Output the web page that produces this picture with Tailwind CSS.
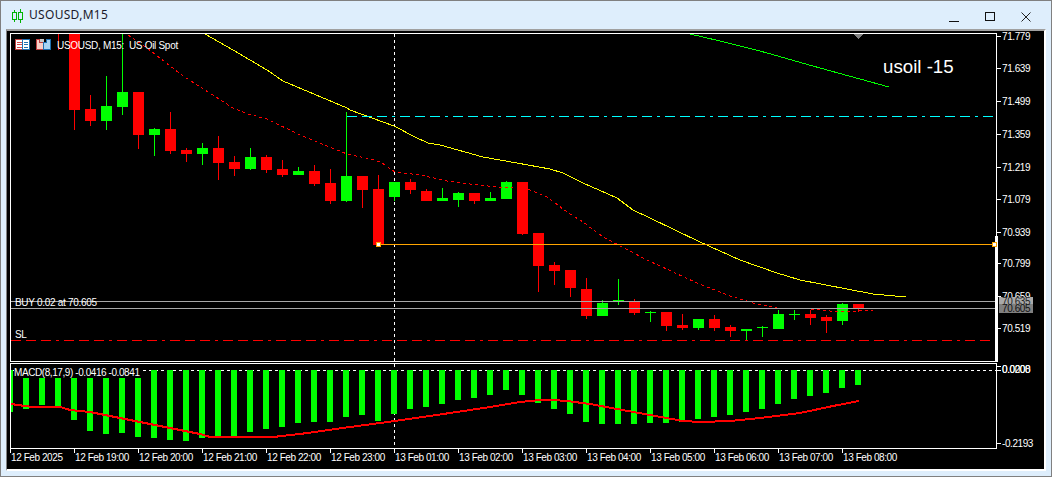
<!DOCTYPE html>
<html>
<head>
<meta charset="utf-8">
<script src="https://cdn.jsdelivr.net/npm/@tailwindcss/browser@4"></script>
</head>
<body class="m-0 overflow-hidden">
<div class="w-[1052px] h-[477px] flex flex-col bg-[#deeefc] border border-[#808080] font-['Liberation_Sans',sans-serif]">
  <header class="h-[28px] flex items-center shrink-0">
    <svg class="ml-[11px] mt-[1px]" width="12" height="14" viewBox="0 0 12 14" fill="none" stroke="#00b400" stroke-width="1" shape-rendering="crispEdges">
      <path d="M2.5 1V13M8.5 0V14"/>
      <rect x="0.5" y="3.5" width="4" height="7" fill="#deeefc"/>
      <rect x="6.5" y="3.5" width="4" height="7" fill="#deeefc"/>
    </svg>
    <span class="ml-[5px] text-[12px] tracking-[0.3px] text-[#1a1a2a] font-['Noto_Sans',sans-serif]">USOUSD,M15</span>
    <div class="ml-auto mr-[7px] flex h-full">
      <div class="w-9 flex items-center justify-center">
        <svg class="mt-[3px]" width="10" height="10" viewBox="0 0 10 10" fill="none" stroke="#111" shape-rendering="crispEdges"><path d="M0 9.5H10"/></svg>
      </div>
      <div class="w-9 flex items-center justify-center">
        <svg class="mt-[3px]" width="10" height="10" viewBox="0 0 10 10" fill="none" stroke="#111" shape-rendering="crispEdges"><rect x="0.5" y="0.5" width="9" height="8"/></svg>
      </div>
      <div class="w-9 flex items-center justify-center">
        <svg class="mt-[3px]" width="10" height="10" viewBox="0 0 10 10" fill="none" stroke="#222"><path d="M0.5 0.5L9.5 9.5M9.5 0.5L0.5 9.5"/></svg>
      </div>
    </div>
  </header>
  <main class="ml-[5px] mr-[5px] border-t-2 border-t-[#a0a0a0] border-l border-l-[#808080] border-r-2 border-r-white border-b-2 border-b-white bg-black">
    <svg class="block text-[10px] tracking-[-0.42px]" width="1036" height="438" viewBox="7 31 1036 438" fill="none">
      <g shape-rendering="crispEdges">
        <!-- crosshair and zero line lie under the series -->
        <path stroke="#ffffff" stroke-dasharray="3 3" d="M394.5 34V448M11 370.5H996"/>
        <!-- candles -->
        <path stroke="#ff0000" d="M58.5 34V50M74.5 34V130M90.5 95V126M138.5 92V149M170.5 112V154M186.5 148V162M218.5 136V180M234.5 156V176M266.5 155V173M282.5 160V177M314.5 165V186M330.5 169V204M362.5 176V208M378.5 175V245M410.5 179V194M426.5 189V201M474.5 193V204M522.5 182V235M538.5 233V292M554.5 262V285M570.5 270V297M586.5 278V319M634.5 299V315M666.5 312V331M682.5 314V330M714.5 315V331M730.5 325V337M810.5 310V325M826.5 315V333M858.5 304V312"/>
        <path fill="#ff0000" d="M69 34h11v76h-11zM85 109h11v12h-11zM133 92h11v43h-11zM165 129h11v22h-11zM181 150h11v4h-11zM213 148h11v15h-11zM229 162h11v7h-11zM261 157h11v13h-11zM277 169h11v6h-11zM309 171h11v13h-11zM325 183h11v18h-11zM357 176h11v14h-11zM373 189h11v56h-11zM405 182h11v8h-11zM421 191h11v10h-11zM469 193h11v8h-11zM517 182h11v52h-11zM533 233h11v33h-11zM549 265h11v6h-11zM565 270h11v18h-11zM581 289h11v27h-11zM629 301h11v12h-11zM661 312h11v14h-11zM677 325h11v3h-11zM709 319h11v9h-11zM725 327h11v4h-11zM805 314h11v4h-11zM821 317h11v4h-11zM853 304h11v5h-11z"/>
        <path stroke="#00ff00" d="M106.5 76V130M122.5 34V115M154.5 128V156M202.5 143V165M250.5 148V170M298.5 167V175M346.5 112V202M394.5 182V201M442.5 188V201M458.5 192V207M490.5 192V201M506.5 181V199M602.5 300V316M618.5 279V305M650.5 311V322M698.5 319V330M746.5 329V341M762.5 326V337M778.5 310V329M794.5 310V320M842.5 303V325"/>
        <path fill="#00ff00" d="M101 106h11v15h-11zM117 92h11v15h-11zM149 129h11v6h-11zM197 148h11v6h-11zM245 157h11v12h-11zM293 171h11v4h-11zM341 176h11v25h-11zM389 182h11v15h-11zM437 198h11v3h-11zM453 193h11v7h-11zM485 198h11v3h-11zM501 182h11v17h-11zM597 303h11v13h-11zM613 300h11v1h-11zM645 312h11v1h-11zM693 319h11v9h-11zM741 329h11v2h-11zM757 327h11v1h-11zM773 314h11v15h-11zM789 314h11v1h-11zM837 304h11v17h-11z"/>
        <!-- MACD histogram -->
        <path fill="#00ff00" d="M11 370h2v42h-2zM23 370h6v39h-6zM39 370h6v35h-6zM55 370h6v36h-6zM71 370h6v50h-6zM87 370h6v61h-6zM103 370h6v64h-6zM119 370h6v63h-6zM135 370h6v67h-6zM151 370h6v68h-6zM167 370h6v70h-6zM183 370h6v71h-6zM199 370h6v68h-6zM215 370h6v66h-6zM231 370h6v66h-6zM247 370h6v62h-6zM263 370h6v59h-6zM279 370h6v57h-6zM295 370h6v53h-6zM311 370h6v52h-6zM327 370h6v52h-6zM343 370h6v47h-6zM359 370h6v45h-6zM375 370h6v51h-6zM391 370h6v44h-6zM407 370h6v39h-6zM423 370h6v37h-6zM439 370h6v34h-6zM455 370h6v30h-6zM471 370h6v28h-6zM487 370h6v25h-6zM503 370h6v20h-6zM519 370h6v25h-6zM535 370h6v33h-6zM551 370h6v39h-6zM567 370h6v44h-6zM583 370h6v52h-6zM599 370h6v54h-6zM615 370h6v54h-6zM631 370h6v54h-6zM647 370h6v53h-6zM663 370h6v53h-6zM679 370h6v52h-6zM695 370h6v49h-6zM711 370h6v47h-6zM727 370h6v45h-6zM743 370h6v42h-6zM759 370h6v39h-6zM775 370h6v34h-6zM791 370h6v29h-6zM807 370h6v26h-6zM823 370h6v23h-6zM839 370h6v18h-6zM855 370h6v15h-6z"/>
        <!-- moving averages -->
        <polyline stroke="#ffff00" points="205,34 233,50 267,70 283,81 347,108 350,110 394,126 415,137 428,143 440,145 483,157 517,163 550,169 563,173 583,183 617,198 633,210 650,218 700,242 740,260 777,273 800,280 873,294 906,297"/>
        <polyline stroke="#ff0000" stroke-dasharray="3 3" points="128,35 147,48 183,76 233,108 248,114 267,119 300,135 347,154 375,160 382,163 395,172 420,175 447,181 470,184 497,187 513,187 530,190 547,197 567,212 583,222 603,237 647,260 697,283 730,296 753,303 777,308 810,309 840,312 873,310"/>
        <polyline stroke="#00ff00" points="690,34 720,41 760,51 820,68 889,87"/>
        <!-- levels -->
        <path stroke="#00ffff" stroke-dasharray="10 5 10 5 10 5 3 5" d="M347 116.5H996"/>
        <path stroke="#ffa500" d="M378 244.5H995"/>
        <path stroke="#a8a8a8" d="M11 301.5H996M11 308.5H996"/>
        <path stroke="#ff0000" stroke-dasharray="10 5 10 5 10 5 3 5" d="M11 340.5H996"/>
        <!-- MACD signal -->
        <polyline stroke="#ff0000" stroke-width="2" points="11,404 25,406 33,407 60,407 70,410 90,412 110,416 140,422 160,426 180,430 200,434 210,437 273,437 300,434 350,427 395,421 450,413 490,407 520,402 540,400 553,400 567,401 590,404 617,409 650,415 683,421 700,422 730,421 760,418 800,413 833,406 859,401"/>
        <!-- label backing -->
        <rect x="14" y="369" width="129" height="9" fill="#000000"/>
        <!-- frames -->
        <rect x="10.5" y="33.5" width="986" height="328" stroke="#ffffff"/>
        <rect x="10.5" y="363.5" width="986" height="85" stroke="#ffffff"/>
        <rect x="995" y="236" width="3" height="126" fill="#ffffff"/>
        <polygon points="854,34 863,34 858.5,39" fill="#808080"/>
        <!-- markers -->
        <rect x="376.5" y="242.5" width="4" height="4" fill="#ffffff" stroke="#ffa500"/>
        <rect x="992.5" y="242.5" width="4" height="4" fill="#ffffff" stroke="#ffa500"/>
        <!-- ticks -->
        <path stroke="#ffffff" d="M997 36.5H1001M997 68.5H1001M997 101.5H1001M997 134.5H1001M997 167.5H1001M997 199.5H1001M997 232.5H1001M997 263.5H1001M997 296.5H1001M997 328.5H1001M997 366.5H1001M997 370.5H1001M997 443.5H1001M10.5 449V453M74.5 449V453M138.5 449V453M202.5 449V453M266.5 449V453M330.5 449V453M394.5 449V453M458.5 449V453M522.5 449V453M586.5 449V453M650.5 449V453M714.5 449V453M778.5 449V453M842.5 449V453"/>
        <!-- toolbar icons -->
        <rect x="15.5" y="39.5" width="7" height="10" fill="#ffffff" stroke="#c04040"/>
        <rect x="22.5" y="39.5" width="7" height="10" fill="#ffffff" stroke="#1f6fb0"/>
        <path stroke="#d84a4a" d="M17 42.5H22M17 44.5H22M17 47.5H22"/>
        <path stroke="#1f6fb0" d="M24 42.5H28M24 44.5H28M24 47.5H28"/>
        <path fill="#f9cfc6" stroke="#c04040" d="M36.5 39.5H39.5V42.5H43.5V49.5H36.5Z"/>
        <path fill="#a8d4f2" stroke="#1f6fb0" d="M43.5 42.5H46.5V39.5H50.5V49.5H43.5Z"/>
        <rect x="40" y="39" width="4" height="3" fill="#c8c8c8"/>
      </g>
      <!-- text -->
      <g class="fill-white">
      <text x="57" y="49" class="tracking-[-0.3px]">USOUSD, M15:&#160; US Oil Spot</text>
      <text x="15" y="306" class="tracking-[-0.3px]">BUY 0.02 at 70.605</text>
      <text x="15" y="338">SL</text>
      <text x="14" y="376">MACD(8,17,9) -0.0416 -0.0841</text>
      <text x="883" y="73" class="text-[18.7px] tracking-normal">usoil -15</text>
      <text x="1002" y="40">71.779</text>
      <text x="1002" y="72">71.639</text>
      <text x="1002" y="105">71.499</text>
      <text x="1002" y="138">71.359</text>
      <text x="1002" y="171">71.219</text>
      <text x="1002" y="203">71.079</text>
      <text x="1002" y="236">70.939</text>
      <text x="1002" y="267">70.799</text>
      <text x="1002" y="300">70.659</text>
      <rect x="999" y="297" width="34" height="7" fill="#a9a9a9"/>
      <text x="1002" y="305" class="fill-[#222222]">70.635</text>
      <rect x="999" y="304" width="34" height="9" fill="#808080"/>
      <text x="1002" y="312" class="fill-[#111111]">70.605</text>
      <text x="1002" y="332">70.519</text>
      <text x="1002" y="373">0.0000</text>
      <text x="1002" y="373">0.0208</text>
      <text x="1002" y="447">-0.2193</text>
      <text x="11" y="461">12 Feb 2025</text>
      <text x="75" y="461">12 Feb 19:00</text>
      <text x="139" y="461">12 Feb 20:00</text>
      <text x="203" y="461">12 Feb 21:00</text>
      <text x="267" y="461">12 Feb 22:00</text>
      <text x="331" y="461">12 Feb 23:00</text>
      <text x="395" y="461">13 Feb 01:00</text>
      <text x="459" y="461">13 Feb 02:00</text>
      <text x="523" y="461">13 Feb 03:00</text>
      <text x="587" y="461">13 Feb 04:00</text>
      <text x="651" y="461">13 Feb 05:00</text>
      <text x="715" y="461">13 Feb 06:00</text>
      <text x="779" y="461">13 Feb 07:00</text>
      <text x="843" y="461">13 Feb 08:00</text>
      </g>
    </svg>
  </main>
</div>
</body>
</html>
